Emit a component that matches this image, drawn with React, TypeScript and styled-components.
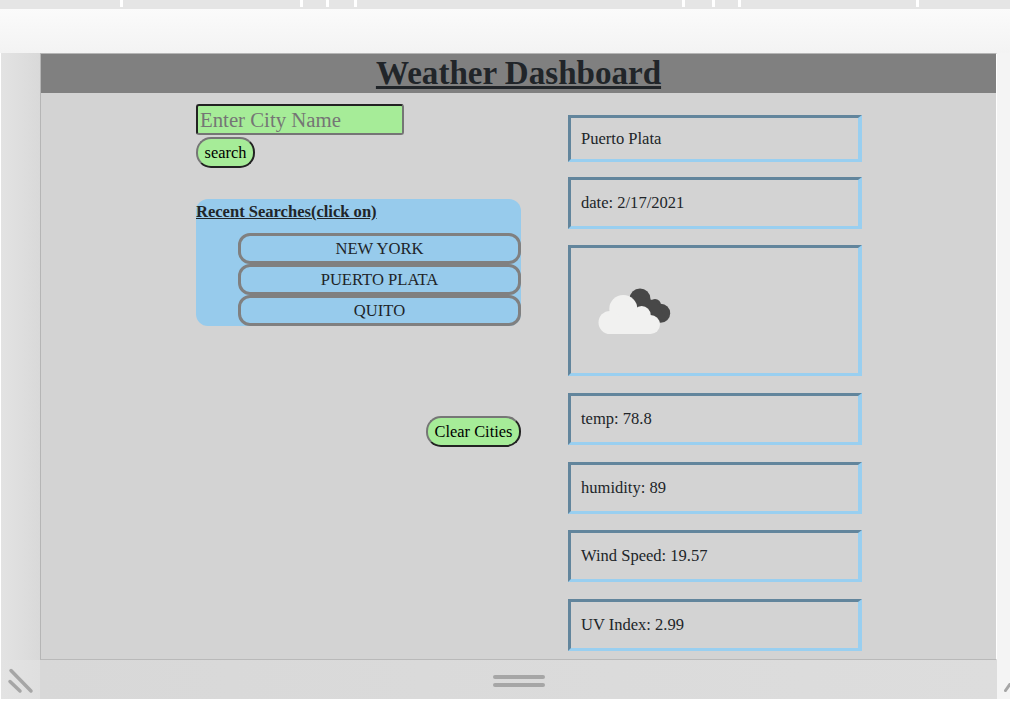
import React from "react";
import styled, { createGlobalStyle } from "styled-components";

const GlobalStyle = createGlobalStyle`
  html, body {
    margin: 0;
    padding: 0;
    background: #fff;
    overflow: hidden;
  }
  * {
    box-sizing: border-box;
  }
`;

const Page = styled.div`
  width: 1010px;
  height: 701px;
  display: flex;
  flex-direction: column;
  font-family: "Liberation Serif", "Times New Roman", serif;
  font-size: 16.55px;
  color: #212529;
`;

const TopStrip = styled.div`
  height: 9px;
  background: #e5e5e5;
  display: flex;
  align-items: flex-start;
`;

const Tick = styled.span<{ $gap: number }>`
  width: 3px;
  height: 7px;
  background: #fff;
  margin-left: ${(p) => p.$gap}px;
`;

const Band = styled.div`
  height: 44px;
  background: linear-gradient(#fbfbfb, #f3f3f3);
`;

const Frame = styled.div`
  height: 607px;
  display: flex;
`;

const LeftGutter = styled.div`
  width: 40px;
  border-left: 1px solid #fff;
  background: linear-gradient(90deg, #e3e3e3, #d9d9d9);
`;

const RightGutter = styled.div`
  flex: 1;
  background: #f4f4f4;
`;

const Main = styled.main`
  width: 957px;
  display: flex;
  flex-direction: column;
  background: #d3d3d3;
  border-top: 1px solid #b5b5b5;
  border-left: 1px solid #b5b5b5;
  border-right: 1px solid #fff;
  border-bottom: 1px solid #b9b9b9;
`;

const Header = styled.header`
  height: 39px;
  flex: none;
  background: #808080;
  text-align: center;
`;

const Title = styled.h1`
  margin: 0;
  font-size: 33.1px;
  line-height: 39px;
  font-weight: bold;
  text-decoration: underline;
`;

const Columns = styled.div`
  display: flex;
  padding-left: 155px;
  gap: 47px;
`;

const LeftColumn = styled.section`
  width: 325px;
  display: flex;
  flex-direction: column;
  align-items: flex-start;
  padding-top: 11px;
`;

const RightColumn = styled.section`
  width: 294px;
  display: flex;
  flex-direction: column;
  padding-top: 22px;
`;

const CityInput = styled.input`
  width: 208px;
  height: 31px;
  padding: 1px 2px 0;
  font-family: inherit;
  font-size: 20.8px;
  background: #a6ec98;
  border: 2px solid #757575;
  border-top-color: #222;
  border-left-color: #222;
  border-radius: 3px;
  outline: none;
  &::placeholder {
    color: #757575;
    opacity: 1;
  }
`;

const PillButton = styled.button<{ $selfEnd?: boolean }>`
  height: 31px;
  padding: 0 6px;
  font-family: inherit;
  font-size: 16.4px;
  color: #000;
  background: #a6ec98;
  border: 2px solid #222;
  border-top-color: #767676;
  border-left-color: #767676;
  border-radius: 15px;
  align-self: ${(p) => (p.$selfEnd ? "flex-end" : "flex-start")};
`;

const SearchButton = styled(PillButton)`
  width: 59px;
  margin-top: 2px;
`;

const ClearButton = styled(PillButton)`
  width: 95px;
  margin-top: 90px;
`;

const RecentPanel = styled.div`
  width: 325px;
  height: 127px;
  margin-top: 31px;
  background: #97cbec;
  border-radius: 12px;
  display: flex;
  flex-direction: column;
`;

const RecentTitle = styled.h2`
  margin: 0;
  height: 34px;
  font-size: 16.55px;
  line-height: 26px;
  font-weight: bold;
  text-decoration: underline;
`;

const CityList = styled.div`
  margin-left: 42px;
  display: flex;
  flex-direction: column;
`;

const CityItem = styled.div`
  height: 31px;
  border: 3.5px solid #808080;
  border-radius: 12px;
  display: flex;
  align-items: center;
  justify-content: center;
  font-size: 16.6px;
  text-transform: uppercase;
`;

const InfoCard = styled.div<{ $height: number; $gap: number }>`
  height: ${(p) => p.$height}px;
  margin-top: ${(p) => p.$gap}px;
  padding-left: 10px;
  display: flex;
  align-items: center;
  border-style: solid;
  border-width: 3px 4px 3px 3px;
  border-color: #62859c #99cff0 #99cff0 #62859c;
`;

const WeatherIcon = styled.svg`
  display: block;
  margin: 3px 0 0 17px;
`;

const BottomBar = styled.div`
  height: 39px;
  display: flex;
`;

const Corner = styled.div`
  width: 40px;
  border-left: 1px solid #fff;
  background: linear-gradient(90deg, #e3e3e3, #dfdfdf);
  display: flex;
  align-items: center;
  padding-left: 6px;
`;

const BottomMid = styled.div`
  width: 957px;
  padding-top: 3px;
  background: linear-gradient(90deg, #d8d8d8, #dddddd);
  display: flex;
  align-items: center;
  justify-content: center;
`;

const BottomRight = styled.div`
  flex: 1;
  background: #f4f4f4;
  display: flex;
  align-items: flex-end;
  justify-content: flex-end;
  padding-bottom: 7px;
`;

const Handle = styled.div`
  display: flex;
  flex-direction: column;
  gap: 4px;
`;

const HandleLine = styled.span`
  display: block;
  width: 52px;
  height: 4px;
  border-radius: 2px;
  background: #a6a6a6;
`;

const ticks = [120, 177, 23, 25, 325, 27, 23, 175];
const cities = ["New York", "Puerto Plata", "Quito"];
const stats = ["temp: 78.8", "humidity: 89", "Wind Speed: 19.57", "UV Index: 2.99"];
const statGaps = [17, 17, 16, 17];

export default function App() {
  return (
    <Page>
      <GlobalStyle />
      <TopStrip>
        {ticks.map((gap, i) => (
          <Tick key={i} $gap={gap} />
        ))}
      </TopStrip>
      <Band />
      <Frame>
        <LeftGutter />
        <Main>
          <Header>
            <Title>Weather Dashboard</Title>
          </Header>
          <Columns>
            <LeftColumn>
              <CityInput placeholder="Enter City Name" />
              <SearchButton>search</SearchButton>
              <RecentPanel>
                <RecentTitle>Recent Searches(click on)</RecentTitle>
                <CityList>
                  {cities.map((city) => (
                    <CityItem key={city}>{city}</CityItem>
                  ))}
                </CityList>
              </RecentPanel>
              <ClearButton $selfEnd>Clear Cities</ClearButton>
            </LeftColumn>
            <RightColumn>
              <InfoCard $height={47} $gap={0}>Puerto Plata</InfoCard>
              <InfoCard $height={52} $gap={15}>date: 2/17/2021</InfoCard>
              <InfoCard $height={131} $gap={16}>
                <WeatherIcon width="76" height="50" viewBox="0 0 76 50">
                  <g fill="#484848">
                    <circle cx="42" cy="12" r="10.5" />
                    <circle cx="57" cy="18" r="6" />
                    <circle cx="62.7" cy="26.3" r="9.5" />
                    <path d="M36 8 L58 14 L68 32 L52 34 Z" />
                  </g>
                  <g fill="#f1f1f0">
                    <circle cx="25.3" cy="22" r="14" />
                    <circle cx="43.7" cy="28" r="9" />
                    <circle cx="12" cy="35.5" r="11.5" />
                    <circle cx="52.5" cy="37.5" r="9.5" />
                    <rect x="12" y="30" width="40.5" height="17" />
                  </g>
                </WeatherIcon>
              </InfoCard>
              {stats.map((stat, i) => (
                <InfoCard key={stat} $height={52} $gap={statGaps[i]}>
                  {stat}
                </InfoCard>
              ))}
            </RightColumn>
          </Columns>
        </Main>
        <RightGutter />
      </Frame>
      <BottomBar>
        <Corner>
          <svg width="28" height="28" viewBox="0 0 28 28">
            <path
              d="M4 4.5 L24 25 M3 15.5 L13 25"
              stroke="#a6a6a6"
              strokeWidth="3.5"
              strokeLinecap="round"
            />
          </svg>
        </Corner>
        <BottomMid>
          <Handle>
            <HandleLine />
            <HandleLine />
          </Handle>
        </BottomMid>
        <BottomRight>
          <svg width="6" height="9" viewBox="0 0 6 9">
            <path d="M1.5 7.5 L6 1" stroke="#a6a6a6" strokeWidth="3" strokeLinecap="round" />
          </svg>
        </BottomRight>
      </BottomBar>
    </Page>
  );
}
